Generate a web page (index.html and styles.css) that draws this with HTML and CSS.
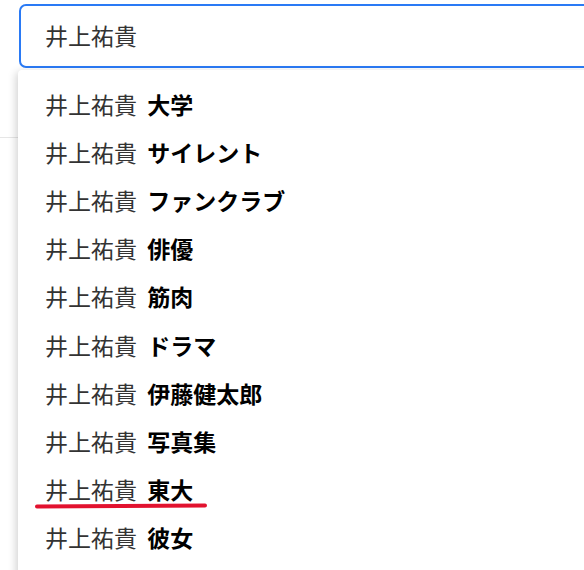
FILE: index.html
```html
<!DOCTYPE html>
<html lang="ja">

<head>
  <meta charset="utf-8">
  <title>検索</title>
  <link rel="stylesheet" href="styles.css">
</head>

<body>

  <div class="page">
    <div class="search-box">
      <span class="query">井上祐貴</span>
    </div>
    <div class="divider"></div>

    <!-- suggestion list drops over the page -->
    <ul class="suggest">
      <li>井上祐貴 <b>大学</b></li>
      <li>井上祐貴 <b>サイレント</b></li>
      <li>井上祐貴 <b>ファンクラブ</b></li>
      <li>井上祐貴 <b>俳優</b></li>
      <li>井上祐貴 <b>筋肉</b></li>
      <li>井上祐貴 <b>ドラマ</b></li>
      <li>井上祐貴 <b>伊藤健太郎</b></li>
      <li>井上祐貴 <b>写真集</b></li>
      <li class="marked">井上祐貴 <b>東大</b><span class="mark"></span></li>
      <li>井上祐貴 <b>彼女</b></li>
    </ul>
  </div>

</body>

</html>
```

FILE: styles.css
```css
* {
  margin: 0;
  padding: 0;
  box-sizing: border-box;
}

body {
  font-family: "Noto Sans CJK JP", "Noto Sans", sans-serif;
  color: #333;
  background: #fff;
  overflow: hidden;
}

.page {
  position: relative;
  padding: 4px 0 0 19px;
  height: 570px;
}

.search-box {
  width: 620px;
  height: 64px;
  border: 2.5px solid #2a7af5;
  border-radius: 7px;
  padding: 0 0 3px 24px;
  display: flex;
  align-items: center;
  font-size: 23px;
}

.divider {
  margin-top: 69px;
  margin-left: -19px;
  height: 1px;
  background: #e6e6e6;
}

.suggest {
  position: absolute;
  top: 70px;
  left: 18px;
  width: 620px;
  height: 540px;
  list-style: none;
  background: #fff;
  padding-top: 10px;
  box-shadow: -2px 2px 8px rgba(0, 0, 0, 0.18);
  border-radius: 4px 0 0 0;
}

.suggest li {
  position: relative;
  height: 48.1px;
  display: flex;
  align-items: center;
  padding-left: 27px;
  font-size: 23px;
  white-space: pre;
  word-spacing: 5px;
}

.suggest b {
  color: #000;
  font-weight: bold;
}

/* red pen line under one entry */
.mark {
  position: absolute;
  left: 17px;
  top: 39px;
  width: 172px;
  height: 3.5px;
  border-radius: 2px;
  background: #e2122f;
  transform: rotate(-0.3deg);
}
```
